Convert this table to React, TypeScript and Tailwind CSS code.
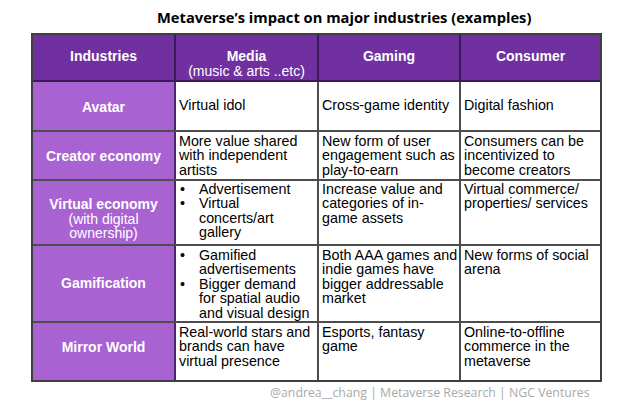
import React from "react";

type Cell = { lines?: string[]; bullets?: string[][] };

type Row = {
  label: string[];
  sub?: string[];
  h: string;
  labelPad: string;
  bodyPad: string;
  cells: Cell[];
};

const rows: Row[] = [
  {
    label: ["Avatar"],
    h: "h-[50px]",
    labelPad: "pt-[2px]",
    bodyPad: "pt-[16px]",
    cells: [
      { lines: ["Virtual idol"] },
      { lines: ["Cross-game identity"] },
      { lines: ["Digital fashion"] },
    ],
  },
  {
    label: ["Creator economy"],
    h: "h-[49px]",
    labelPad: "pt-[2px]",
    bodyPad: "pt-[2px]",
    cells: [
      { lines: ["More value shared", "with independent", "artists"] },
      { lines: ["New form of user", "engagement such as", "play-to-earn"] },
      { lines: ["Consumers can be", "incentivized to", "become creators"] },
    ],
  },
  {
    label: ["Virtual economy"],
    sub: ["(with digital", "ownership)"],
    h: "h-[65px]",
    labelPad: "pt-[13px]",
    bodyPad: "pt-[1px]",
    cells: [
      { bullets: [["Advertisement"], ["Virtual", "concerts/art", "gallery"]] },
      { lines: ["Increase value and", "categories of in-", "game assets"] },
      { lines: ["Virtual commerce/", "properties/ services"] },
    ],
  },
  {
    label: ["Gamification"],
    h: "h-[77px]",
    labelPad: "pt-[0px]",
    bodyPad: "pt-[2px]",
    cells: [
      {
        bullets: [
          ["Gamified", "advertisements"],
          ["Bigger demand", "for spatial audio", "and visual design"],
        ],
      },
      { lines: ["Both AAA games and", "indie games have", "bigger addressable", "market"] },
      { lines: ["New forms of social", "arena"] },
    ],
  },
  {
    label: ["Mirror World"],
    h: "h-[57px]",
    labelPad: "pb-[8px]",
    bodyPad: "pt-[2px]",
    cells: [
      { lines: ["Real-world stars and", "brands can have", "virtual presence"] },
      { lines: ["Esports, fantasy", "game"] },
      { lines: ["Online-to-offline", "commerce in the", "metaverse"] },
    ],
  },
];

const colW = ["w-[143px]", "w-[143px]", "w-[142px]", "w-[139px]"];

function BodyCell({ cell, w, pad, last }: { cell: Cell; w: string; pad: string; last: boolean }) {
  return (
    <div
      className={`${w} ${pad} pl-[3px] text-[14.3px] leading-[14.4px] text-black bg-white ${
        last ? "" : "border-r-2 border-[#4d4d4d]"
      }`}
    >
      {cell.lines &&
        cell.lines.map((l) => (
          <div key={l} className="whitespace-nowrap">
            {l}
          </div>
        ))}
      {cell.bullets &&
        cell.bullets.map((b, i) => (
          <div key={i} className="flex">
            <span className="w-[20px] pl-[1px] shrink-0">•</span>
            <div>
              {b.map((l) => (
                <div key={l} className="whitespace-nowrap">
                  {l}
                </div>
              ))}
            </div>
          </div>
        ))}
    </div>
  );
}

export default function App() {
  return (
    <div className="w-[640px] h-[405px] bg-white overflow-hidden font-['Liberation_Sans',Arial,sans-serif]">
      <h1 className="h-[33px] pl-[157px] pt-[7px] text-[14.7px] leading-[20px] font-bold text-black font-['Open_Sans',sans-serif] whitespace-nowrap">
        Metaverse’s impact on major industries (examples)
      </h1>

      <div className="ml-[31px] w-[571px] border-2 border-[#3f3f3f]">
        {/* header */}
        <div className="flex h-[47px] bg-[#7030a0] border-b-2 border-[#3b1a58] text-white font-bold text-[14px] leading-[15px] text-center">
          <div className={`${colW[0]} pt-[14px] border-r-2 border-[#3b1a58]`}>Industries</div>
          <div className={`${colW[1]} pt-[14px] border-r-2 border-[#3b1a58]`}>
            Media
            <div className="font-normal">(music &amp; arts ..etc)</div>
          </div>
          <div className={`${colW[2]} pt-[14px] border-r-2 border-[#3b1a58]`}>Gaming</div>
          <div className={`${colW[3]} pt-[14px]`}>Consumer</div>
        </div>

        {rows.map((r, i) => (
          <div
            key={r.label[0]}
            className={`flex ${r.h} ${i < rows.length - 1 ? "border-b-2 border-[#4d4d4d]" : ""}`}
          >
            <div
              className={`${colW[0]} ${r.labelPad} bg-[#a862d2] border-r-2 border-[#4a2766] flex flex-col items-center justify-center text-white text-[14px] leading-[14.5px] text-center`}
            >
              <div className="font-bold">{r.label[0]}</div>
              {r.sub && r.sub.map((s) => <div key={s}>{s}</div>)}
            </div>
            {r.cells.map((c, j) => (
              <BodyCell key={j} cell={c} w={colW[j + 1]} pad={r.bodyPad} last={j === 2} />
            ))}
          </div>
        ))}
      </div>

      <p className="pl-[270px] pt-[3px] text-[12.3px] leading-[16px] text-[#a9a9a9] font-['Open_Sans',sans-serif] whitespace-nowrap">
        @andrea__chang | Metaverse Research | NGC Ventures
      </p>
    </div>
  );
}
